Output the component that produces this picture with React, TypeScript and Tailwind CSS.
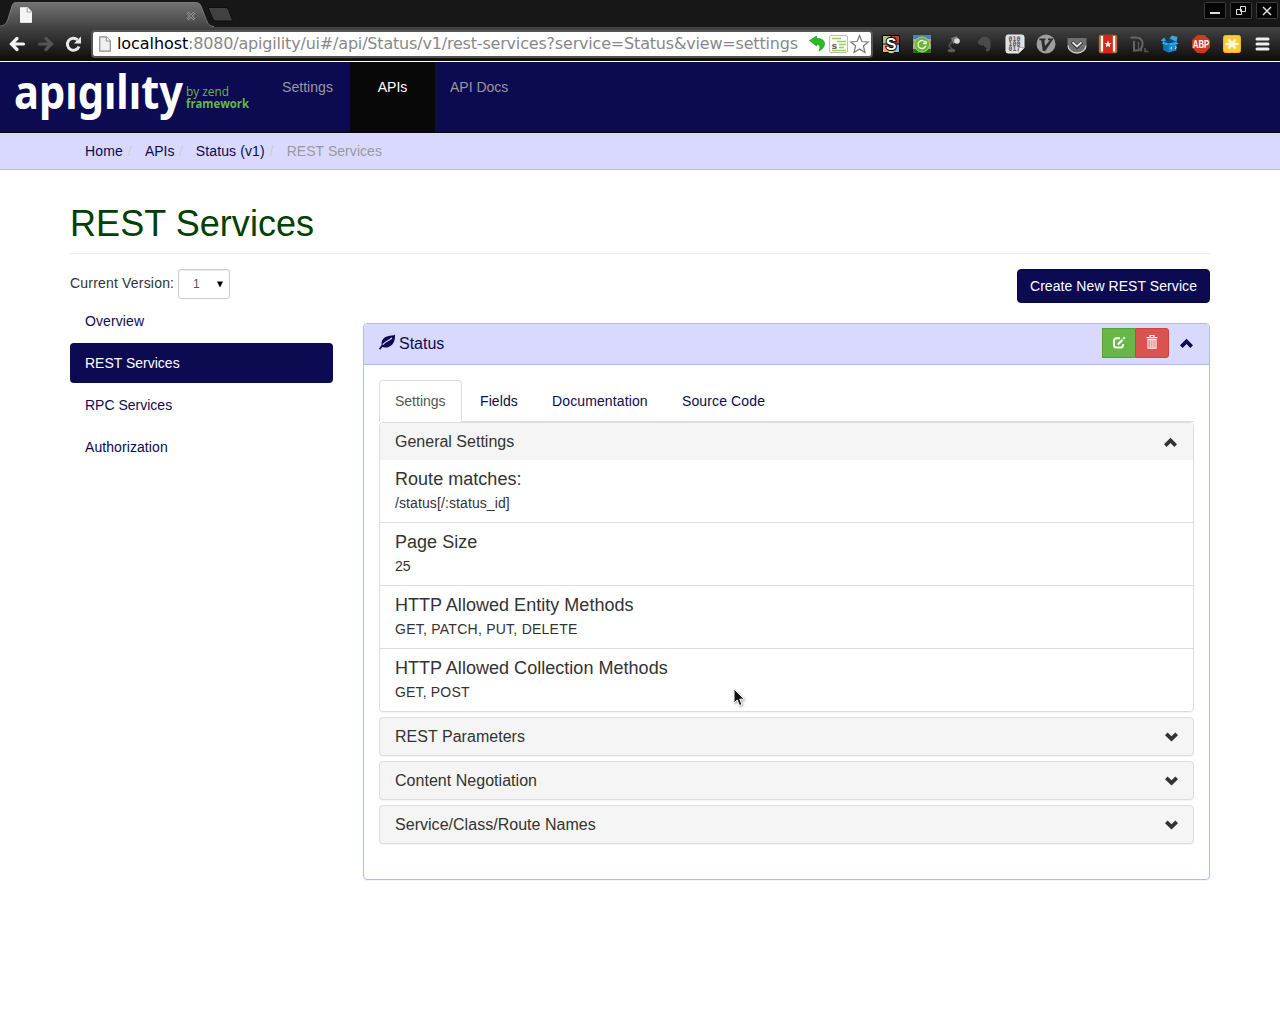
import React from "react";

const sans = "font-['Liberation_Sans',Arial,sans-serif]";

function Chevron({ down = false, className = "" }: { down?: boolean; className?: string }) {
  return (
    <svg width="14" height="10" viewBox="0 0 14 10" className={className} fill="currentColor">
      {down ? (
        <path d="M0 3.200 2.600.5 6.500 4.300 10.400.5 13 3.200 6.500 9.500Z" />
      ) : (
        <path d="M0 7.300 2.600 9.900 6.500 6.100 10.400 9.900 13 7.300 6.500.8Z" />
      )}
    </svg>
  );
}

function Leaf() {
  return (
    <svg width="17" height="17" viewBox="0 0 17 17" className="shrink-0">
      <path d="M16 .5C14.500 1.800 11.500 1.300 8 2.400 4 3.700 2 6.800 2.700 10.800L0 14.800l1.200.9 2.200-2.700c3.500 1.200 7.500.2 9.900-2.600C15.800 7.600 16.200 4 16 .5Z" fill="#0c0b52" />
      <path d="M3.800 10.700C6.500 7.200 9.500 7 13 4" stroke="#d9d9ff" strokeWidth="1.200" fill="none" />
    </svg>
  );
}

function PageIcon({ light = false }: { light?: boolean }) {
  return (
    <svg width="12" height="16" viewBox="0 0 12 16" className="shrink-0">
      <path d="M.7.9h6.600l4 4v10.300H.7Z" fill={light ? "#f4f4f4" : "#efefef"} stroke={light ? "#fff" : "#8d8d8d"} strokeWidth="1.200" />
      <path d="M7.200 1v4h4" fill="#fff" stroke={light ? "#999" : "#8d8d8d"} />
    </svg>
  );
}

function TabStrip() {
  return (
    <div className="relative flex h-[27px] bg-[#171717]">
      <svg width="240" height="27" viewBox="0 0 240 27" className="shrink-0">
        <defs>
          <linearGradient id="tab" x1="0" y1="0" x2="0" y2="1">
            <stop offset="0" stopColor="#737373" />
            <stop offset="1" stopColor="#444" />
          </linearGradient>
        </defs>
        <path d="M0 26.500C5 26 6 24 8 19L12 6C13 3 14 2.500 17 2.500H195C199 2.500 200 4 201 6L206 19C208 24 209 26 214 26.500V27H0Z" fill="url(#tab)" />
        <path d="M0 26C5 25.500 6 24 8 19L12 6C13 3 14 2.500 17 2.500H195C199 2.500 200 4 201 6L206 19C208 24 209 26 214 26.500" fill="none" stroke="#878787" strokeWidth=".8" />
        <path d="M208.500 7.500H225C228 7.500 228.500 9 229 11L232 19C232.500 20.500 232 21 230.500 21H217C214.500 21 213.500 20 212.500 18L208.500 9Z" fill="#414141" stroke="#0d0d0d" />
        <path d="m187.500 12.500 7 7m0-7-7 7" stroke="#909090" strokeWidth="2.600" />
        <path d="m187.500 12.500 7 7m0-7-7 7" stroke="#555" strokeWidth="1" />
      </svg>
      <div className="absolute left-[20px] top-[7px]"><PageIcon light /></div>
      <div className="ml-auto flex gap-[4px] pr-[2px] pt-[2px]">
        {["M6 11h10", "M10.500 4.500h5v5h-5zM6.500 7.500h5v5h-5z", "m7 5 8 8m0-8-8 8"].map((d, i) => (
          <svg key={i} width="22" height="17" viewBox="0 0 22 17">
            <rect x=".5" y=".5" width="21" height="16" rx="1" fill="#050505" stroke="#3d3d3d" />
            <path d={d} fill="none" stroke="#ddd" strokeWidth={i === 0 ? 2 : i === 1 ? 1 : 1.500} />
          </svg>
        ))}
      </div>
    </div>
  );
}

const extensionIcons: React.ReactNode[] = [
  <>
    <path d="M1 1h9v9H1z" fill="#b5c565" /><path d="M10 1h9v9h-9z" fill="#cc3d27" />
    <path d="M1 10h9v9H1z" fill="#eda278" /><path d="M10 10h9v9h-9z" fill="#85bddb" />
    <path d="M1.500 1.500h17v17h-17zM10 1v18M1 10h18" fill="none" stroke="#000" strokeWidth="1" />
    <path d="m7 17 3-2 3 4H8Z" fill="#f2dc2e" />
    <text x="10" y="16" textAnchor="middle" fontSize="16" fontWeight="bold" fontFamily="Liberation Sans" fill="#fff" stroke="#000" strokeWidth="2" paintOrder="stroke">S</text>
  </>,
  <>
    <path d="M1 1h18v18H1z" fill="#a9ad80" /><path d="M1 1h18v4H1z" fill="#527eb4" /><path d="M1 7h18v3H1z" fill="#c47a68" /><path d="M1 15h18v4H1z" fill="#2c6c25" />
    <circle cx="10" cy="10.500" r="7.500" fill="#65b735" stroke="#a6d67e" />
    <path d="M13.600 8.800a4 4 0 1 0 .2 3M14 7v2.500h-3" fill="none" stroke="#e8f6dc" strokeWidth="1.500" />
  </>,
  <>
    <path d="m8 4 6-2 2 5-6 3Z" fill="#777" /><circle cx="14" cy="7" r="2.800" fill="#ddd" />
    <path d="m9 7-3 5 4 4" fill="none" stroke="#555" strokeWidth="1.500" /><ellipse cx="8.500" cy="16.500" rx="3.800" ry="1.800" fill="#5c5c5c" />
  </>,
  <path d="m4 7 4-4c4-1 8 0 8.500 4 .5 4 0 8-1.500 10-2 1-4 0-3-2l2-1c-3 0-4-1-4-3-2 1-5 0-6-2Z" fill="#4b4b4b" />,
  <>
    <path d="M3 1h14q2 0 2 2v11l-5 5H3q-2 0-2-2V3q0-2 2-2Z" fill="#dcdfe2" stroke="#eee" />
    {["010", "100", "017"].map((t, i) => (
      <text key={i} x="3.500" y={6.800 + i * 5.300} fontSize="6.500" fontWeight="bold" fontFamily="DejaVu Sans Mono" fill="#555" textLength="12">{t}</text>
    ))}
    <path d="M19 13.500h-5V19Z" fill="#fff" stroke="#888" strokeWidth=".6" />
  </>,
  <>
    <circle cx="10" cy="10" r="9.500" fill="#9e9e9e" />
    <path d="M3.500 4.500h6v1.800H8.400L9 12l5-5.700h-2V4.500h5.500L9.300 17H6.800L5.300 6.300H3.500Z" fill="#2d2d2d" />
  </>,
  <>
    <path d="M.5 4h19v6a9.500 8.500 0 0 1-19 0Z" fill="#707070" /><path d="M1 11.500a9 7.500 0 0 0 18 0" fill="none" stroke="#cfcfcf" strokeWidth="1.300" />
    <path d="m5 8 5 4.700L15 8" fill="none" stroke="#2a2a2a" strokeWidth="3.600" /><path d="m5.500 8.300 4.500 4.200 4.500-4.200" fill="none" stroke="#e5e5e5" strokeWidth="1.900" />
  </>,
  <>
    <rect x=".8" y=".8" width="18.400" height="18.400" rx="2" fill="#c9622f" /><path d="M2.800 2h2.500v15.500H2.800zM14.700 2h2.500v15.500h-2.500z" fill="#fff" />
    <path d="M5.300 1h9.400v18H5.300z" fill="#d8261b" /><path d="m10 6.500 1 2.400 2.500.2-1.900 1.600.6 2.500-2.200-1.300-2.200 1.300.6-2.500L6.500 9.100 9 8.900Z" fill="#fff" />
  </>,
  <>
    <path d="M1.500 3.500h5.500c4 0 6.500 2.500 6.500 6.500s-2.500 6.500-6.500 6.500H5V7" fill="none" stroke="#666" strokeWidth="2" />
    <path d="M9.500 8v8.500h4M16 14v3.500h3.500" fill="none" stroke="#555" strokeWidth="1.600" />
  </>,
  <>
    <path d="M3.500 8h13v8.500l-8 2-5-2.500Z" fill="#1688cd" /><path d="m3.500 8 5 1.500v9l-5-2.500Z" fill="#0f74b3" />
    <path d="m3.500 8 6-3.500 7 3.500-8 1.500Z" fill="#064b75" />
    <path d="m3.500 8-2.700-1.700L4.500 3.500 6 6.600ZM9.500 4.500 12 1.500l5.500 1.500-1 5ZM16.500 8l-8 1.500 1.800 1.500 8.500-1ZM3.500 8l5 1.500L7 11.300l-5.500-1.700Z" fill="#38a7e7" />
    <path d="m12 12.800-1.500 1.500 1.500 1m3-3 1.300 1-1.300 1.700" fill="none" stroke="#d5f0ff" strokeWidth=".9" />
  </>,
  <>
    <path d="M6.300 1h7.400L19 6.300v7.400L13.700 19H6.300L1 13.700V6.300Z" fill="#cf3a1e" />
    <text x="1.800" y="13.800" fontSize="10" fontWeight="bold" fontFamily="Liberation Sans" fill="#fff" textLength="16.500" lengthAdjust="spacingAndGlyphs">ABP</text>
  </>,
  <>
    <rect x="1.500" y="1.500" width="17" height="17" rx="2" fill="#f9cc36" stroke="#f3b51c" />
    <path d="M10 9.500 6.500 5.500M10 9.500l3.500-4M3.500 10h13M10 10l-3.500 4.500M10 10l3.500 4.500" stroke="#fff8dc" strokeWidth="2.500" />
  </>,
  <path d="M5 5h11M5 10h11M5 15h11" stroke="#eee" strokeWidth="3" strokeLinecap="round" transform="translate(-1)" />,
];

function Toolbar() {
  return (
    <div className="flex h-[34px] items-center bg-gradient-to-b from-[#444] to-[#0d0d0d] pr-[2px]">
      <svg width="91" height="34" viewBox="0 0 91 34" className="shrink-0" fill="none">
        <path d="M23.500 17H12.500M17 11.500 11.500 17l5.500 5.500" stroke="#f2f2f2" strokeWidth="3.200" strokeLinecap="round" />
        <path d="M39.500 17h11M46 11.500l5.500 5.500-5.500 5.500" stroke="#555" strokeWidth="3.200" strokeLinecap="round" />
        <path d="M79 19.500A6 6 0 1 1 77.500 12.800" stroke="#e8e8e8" strokeWidth="3" />
        <path d="M81 9.500v7h-7Z" fill="#e8e8e8" />
      </svg>
      <div className="flex h-[28px] w-[782px] shrink-0 items-center rounded-[4px] border-2 border-[#555] bg-white pl-[6px]">
        <PageIcon />
        <div className="ml-[6px] w-[684px] shrink-0 whitespace-nowrap font-['DejaVu_Sans',sans-serif] text-[16px] leading-[24px] tracking-[-0.187px] text-[#888]">
          <span className="tracking-[-0.08px] text-black">localhost</span>:8080/apigility/ui#/api/Status/v1/rest-services?service=Status&amp;view=settings
        </div>
        <svg width="62" height="22" viewBox="0 0 62 22" className="ml-[7px] shrink-0">
          <path d="m1.500 7.500 7-4.500v2.500c5.500-.5 8.500 2.500 8 6-.5 3-2.500 5-5.500 6.500 1.500-3.500 1.500-6.500-2.500-6.500V13Z" fill="#25bd22" stroke="#138c17" strokeWidth=".6" />
          <rect x="21.500" y="2.500" width="18" height="17" rx="1.500" fill="#fafafa" stroke="#bbb" />
          <path d="M24 5.500h9M29 8.500h9M31 11.500h7M31 14.500h5M24 17.500h14" stroke="#a5d05d" strokeWidth="1.300" />
          <text x="23.500" y="15.500" fontSize="9.500" fontFamily="DejaVu Sans" fontWeight="bold" fill="#666">s</text>
          <path d="m51.500 2.500 2.400 6 6.400.4-4.900 4.100 1.600 6.500-5.500-3.500-5.500 3.500 1.600-6.500-4.900-4.100 6.400-.4Z" fill="#fff" stroke="#777" strokeWidth="1.200" />
        </svg>
      </div>
      <div className="ml-auto flex">
        {extensionIcons.map((icon, i) => (
          <div key={i} className="flex w-[31px] justify-center">
            <svg width="20" height="20" viewBox="0 0 20 20">{icon}</svg>
          </div>
        ))}
      </div>
    </div>
  );
}

function Logo() {
  return (
    <svg width="250" height="70" viewBox="0 0 250 70" className="shrink-0" role="img" aria-label="apigility by zend framework">
      <text x="14" y="47" fontSize="46" fontWeight="700" fontFamily="Noto Sans" fill="#fff" textLength="169" lengthAdjust="spacingAndGlyphs">apıgılıty</text>
      <g fontSize="12" fontFamily="Open Sans" fill="#68b645">
        <text x="186" y="34" textLength="43" lengthAdjust="spacingAndGlyphs">by zend</text>
        <text x="186" y="46" fontWeight="700" textLength="63" lengthAdjust="spacingAndGlyphs">framework</text>
      </g>
    </svg>
  );
}

function Navbar() {
  return (
    <nav className="flex h-[71px] border-b border-[#080808] bg-[#0c0b52] text-[14px] leading-[20px] text-[#999]">
      <Logo />
      <a className="ml-[17px] w-[83px] pl-[15px] pt-[15px] tracking-[0.05px]">Settings</a>
      <a className="w-[85px] bg-[#080808] pt-[15px] text-center text-white">APIs</a>
      <a className="pl-[15px] pt-[15px]">API Docs</a>
    </nav>
  );
}

function Breadcrumb() {
  const slash = <span className="px-[5px] text-[#ccc]">/</span>;
  return (
    <div className="h-[37px] border-b border-[#b3b9fb] bg-[#d9d9ff] text-[14px] leading-[20px] text-[#0c0b52]">
      <div className="mx-auto flex w-[1140px] px-[15px] py-[8px]">
        <span className="w-[38px] tracking-[0.15px]">Home</span>{slash}
        <span className="ml-[8px] w-[29px]">APIs</span>{slash}
        <span className="ml-[8px] w-[69px] tracking-[0.12px]">Status (v1)</span>{slash}
        <span className="ml-[8px] tracking-[0.05px] text-[#999]">REST Services</span>
      </div>
    </div>
  );
}

function Sidebar() {
  return (
    <aside className="w-[263px]">
      <div className="flex h-[30px] items-center text-[#333]">
        <span className="relative -top-px w-[104px] whitespace-nowrap tracking-[0.19px]">Current Version:</span>
        <div className="ml-[4px] flex h-[30px] w-[52px] items-center justify-between rounded-[3px] border border-[#ccc] pl-[14px] pr-[6px] text-[12px] text-[#555] shadow-[inset_0_1px_1px_rgba(0,0,0,0.075)]">
          1
          <svg width="6" height="7" viewBox="0 0 6 7"><path d="M0 .5h6L3 6.500Z" /></svg>
        </div>
      </div>
      <ul className="mt-[2px] flex flex-col gap-[2px] text-[#0c0b52]">
        <li className="px-[15px] py-[10px] tracking-[0.1px]">Overview</li>
        <li className="rounded-[4px] bg-[#0c0b52] px-[15px] py-[10px] text-white">REST Services</li>
        <li className="px-[15px] py-[10px]">RPC Services</li>
        <li className="px-[15px] py-[10px] tracking-[0.08px]">Authorization</li>
      </ul>
    </aside>
  );
}

const settings = [
  { title: "Route matches:", value: "/status[/:status_id]", tracking: "tracking-[0.1px]" },
  { title: "Page Size", value: "25", tracking: "" },
  { title: "HTTP Allowed Entity Methods", value: "GET, PATCH, PUT, DELETE", tracking: "tracking-[0.25px]" },
  { title: "HTTP Allowed Collection Methods", value: "GET, POST", tracking: "tracking-[0.17px]" },
];

function ServicePanel() {
  return (
    <section className="mt-[20px] h-[557px] rounded-[4px] border border-[#b3b9fb] shadow-[0_1px_1px_rgba(0,0,0,0.05)]">
      <header className="flex h-[41px] items-center rounded-t-[3px] border-b border-[#b3b9fb] bg-[#d9d9ff] pl-[15px] pr-[15px] text-[16px] text-[#0c0b52]">
        <div className="-mt-[3px]"><Leaf /></div>
        <span className="ml-[3px]">Status</span>
        <div className="-mt-[2px] ml-auto flex">
          <div className="flex h-[30px] w-[33px] items-center justify-center border border-r-0 border-[#57a13c] bg-[#68b645]">
            <svg width="14" height="14" viewBox="0 0 14 14" fill="none" stroke="#fff">
              <path d="M8 2.200H4.500Q2 2.200 2 4.700v4.500q0 2.300 2.500 2.300h4q2.500 0 2.500-2.500V8" strokeWidth="2" />
              <path d="m5.800 8.500 4.700-4.700" strokeWidth="2.200" /><path d="m11.300 2.900 1.500-1.500" strokeWidth="2" />
            </svg>
          </div>
          <div className="flex h-[30px] w-[34px] items-center justify-center rounded-r-[3px] border border-[#d43f3a] bg-[#d9534f]">
            <svg width="12" height="14" viewBox="0 0 12 14" fill="none" stroke="#fff" className="-mt-[2px]">
              <path d="M4 2.500v-2h4v2M.5 2.700h11" strokeWidth="1.200" /><path d="M2 4.500h8v8.700H2zM4.200 5v8M6.100 5v8M8 5v8" strokeWidth="1.100" />
            </svg>
          </div>
        </div>
        <Chevron className="-mt-[2px] ml-[11px]" />
      </header>
      <div className="p-[15px]">
        <div className="flex h-[42px] border-b border-[#ddd] text-[14px] text-[#0c0b52]">
          <div className="-mb-px h-[42px] w-[83px] rounded-t-[4px] border border-b-0 border-[#ddd] bg-white px-[15px] pt-[10px] text-[#555]">Settings</div>
          <div className="ml-[2px] w-[70px] pl-[16px] pt-[11px] tracking-[0.1px]">Fields</div>
          <div className="ml-[2px] w-[128px] pl-[16px] pt-[11px] tracking-[0.12px]">Documentation</div>
          <div className="ml-[2px] pl-[16px] pt-[11px] tracking-[0.12px]">Source Code</div>
        </div>
        <div className="h-[290px] rounded-[4px] border border-[#ddd] text-[#333] shadow-[0_1px_1px_rgba(0,0,0,0.05)]">
          <div className="flex h-[37px] items-center justify-between rounded-t-[3px] bg-[#f5f5f5] pl-[15px] pr-[15px] text-[16px]">
            General Settings<Chevron />
          </div>
          {settings.map(({ title, value, tracking }, i) => (
            <div key={title} className={i ? "h-[63px] border-t border-[#ddd] px-[15px] pt-[9px]" : "h-[62px] px-[15px] pt-[9px]"}>
              <h4 className="text-[18px] leading-[20px] tracking-[0.03px]">{title}</h4>
              <p className={`mt-[4px] ${tracking}`}>{value}</p>
            </div>
          ))}
        </div>
        {["REST Parameters", "Content Negotiation", "Service/Class/Route Names"].map((name) => (
          <div key={name} className="mt-[5px] flex h-[39px] items-center justify-between rounded-[4px] border border-[#ddd] bg-[#f5f5f5] pl-[15px] pr-[14px] text-[16px] tracking-[0.03px] text-[#333] shadow-[0_1px_1px_rgba(0,0,0,0.05)]">
            {name}<Chevron down />
          </div>
        ))}
      </div>
    </section>
  );
}

export default function App() {
  return (
    <div className={`relative h-[1024px] w-[1280px] overflow-hidden bg-white text-[14px] leading-[20px] ${sans}`}>
      <TabStrip />
      <Toolbar />
      <div className="h-px bg-white" />
      <Navbar />
      <Breadcrumb />
      <main className="mx-auto w-[1140px] pt-[34px]">
        <h1 className="h-[50px] border-b border-[#eee] text-[36px] leading-[40px] tracking-[0.06px] text-[#004000]">REST Services</h1>
        <div className="mt-[15px] flex justify-between">
          <Sidebar />
          <div className="w-[847px]">
            <div className="flex justify-end">
              <button className="h-[34px] w-[193px] whitespace-nowrap rounded-[4px] border border-[#080738] bg-[#0c0b52] tracking-[0.07px] text-white">Create New REST Service</button>
            </div>
            <ServicePanel />
          </div>
        </div>
      </main>
      <svg width="14" height="20" viewBox="0 0 14 20" className="absolute left-[732px] top-[688px] drop-shadow-[1px_1px_1px_rgba(0,0,0,0.35)]">
        <path d="M2 1v14l3.200-3 2.300 5.500 2.500-1-2.300-5.300h4.500Z" fill="#111" stroke="#fff" />
      </svg>
    </div>
  );
}
